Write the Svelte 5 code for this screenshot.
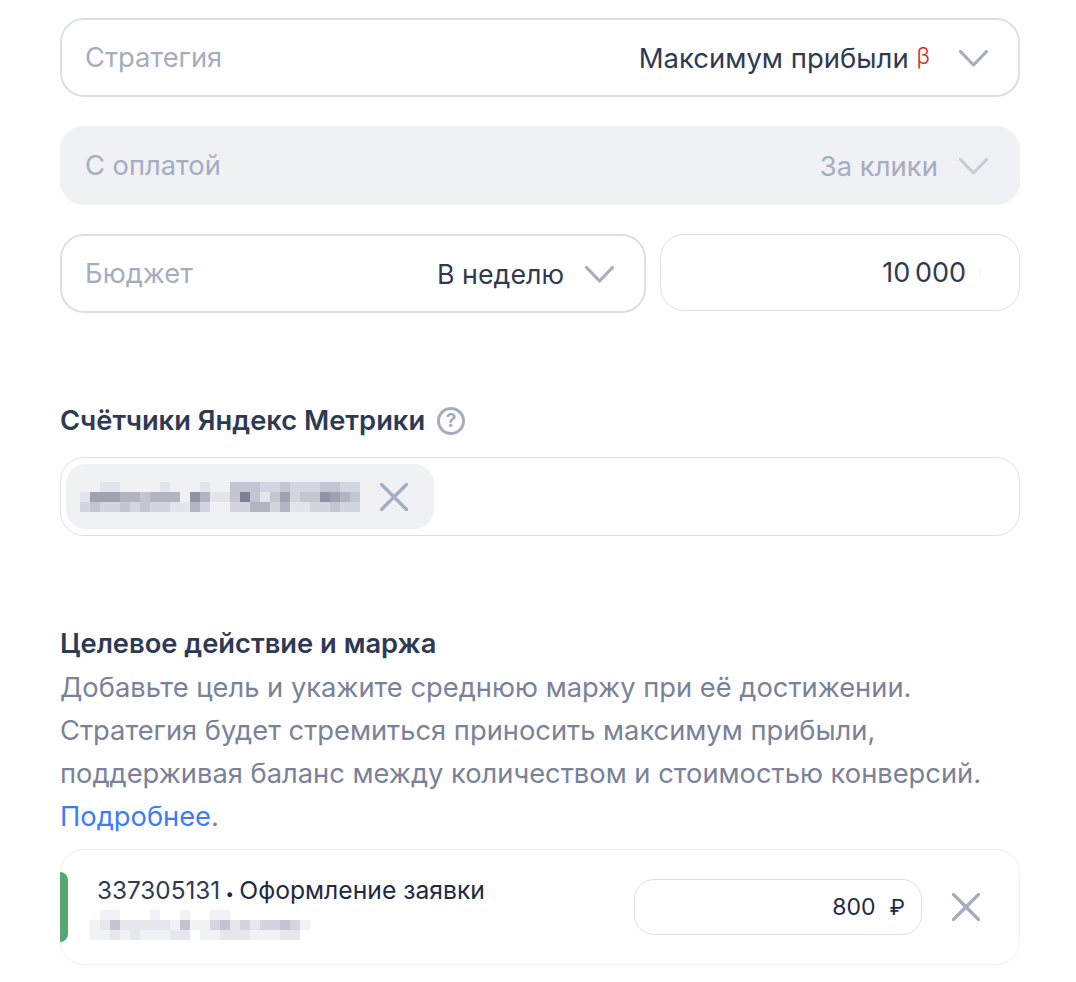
<script lang="ts">
  // digits are shades of the mosaic that stands in for blurred text, 0 = none
  const chipBlur = [
    "0011000010001003332232223322",
    "1555443444064113731352336543",
    "2322323221142002244241122322",
  ];
  const goalBlur = [
    "0110001001001100000000",
    "1242222214113423233431",
    "1121211122011222111220",
  ];
  const chipShades = ["transparent", "#e3e5ec", "#d3d6df", "#c3c6d1", "#b1b5c2", "#9ea2b1", "#8f93a4", "#7c8193"];
  const goalShades = ["transparent", "#f1f2f5", "#e6e7ec", "#d4d6df", "#c2c4d1"];
</script>

{#snippet chevron(muted = false)}
  <svg class="chevron" class:muted width="29" height="17" viewBox="0 0 29 17" fill="none">
    <path d="M1.5 1.5 14.5 15 27.5 1.5" stroke="currentColor" stroke-width="3.2" stroke-linecap="round" stroke-linejoin="round" />
  </svg>
{/snippet}

{#snippet cross()}
  <svg class="cross" width="28" height="28" viewBox="0 0 28 28" fill="none">
    <path d="M1.5 1.5 26.5 26.5M26.5 1.5 1.5 26.5" stroke="currentColor" stroke-width="3.4" stroke-linecap="round" />
  </svg>
{/snippet}

{#snippet mosaic(rows, shades)}
  <div class="mosaic">
    {#each rows as row}
      <div class="mosaic-row">
        {#each row.split("") as c}
          <i style="background: {shades[+c]}"></i>
        {/each}
      </div>
    {/each}
  </div>
{/snippet}

<main class="page">
  <div class="field">
    <span class="label">Стратегия</span>
    <span class="value">Максимум прибыли <sup class="beta">β</sup></span>
    {@render chevron()}
  </div>

  <div class="field disabled">
    <span class="label">С оплатой</span>
    <span class="value">За клики</span>
    {@render chevron(true)}
  </div>

  <div class="budget">
    <div class="field budget-select">
      <span class="label">Бюджет</span>
      <span class="value">В неделю</span>
      {@render chevron()}
    </div>
    <div class="amount">
      <span class="value">10 000</span>
      <i class="caret"></i>
    </div>
  </div>

  <h3 class="counters-title">Счётчики Яндекс Метрики <span class="help">?</span></h3>
  <div class="counters">
    <div class="chip">
      {@render mosaic(chipBlur, chipShades)}
      {@render cross()}
    </div>
  </div>

  <h3 class="goal-title">Целевое действие и маржа</h3>
  <p class="desc">
    Добавьте цель и укажите среднюю маржу при её достижении.<br />
    Стратегия будет стремиться приносить максимум прибыли,<br />
    поддерживая баланс между количеством и стоимостью конверсий.<br />
    <a href="#more">Подробнее</a>.
  </p>

  <div class="goal">
    <span class="goal-bar"></span>
    <div class="goal-info">
      <div class="goal-name"><span class="goal-id">337305131</span><span class="dot">•</span>Оформление заявки</div>
      <div class="goal-blur">
        {@render mosaic(goalBlur, goalShades)}
      </div>
    </div>
    <div class="margin"><span>800</span><span class="rub">₽</span></div>
    {@render cross()}
  </div>
</main>

<style>
  :global(body) {
    background: #fff;
  }
  .page {
    width: 960px;
    padding: 18px 56px 17px 60px;
    font-family: Inter, "Noto Sans", sans-serif;
    font-size: 27.3px;
    color: #2f3a52;
  }
  .field {
    display: flex;
    align-items: center;
    height: 79px;
    box-sizing: border-box;
    padding: 0 30px 0 23px;
    margin-bottom: 29px;
    border: 2px solid #dcdfe9;
    border-radius: 24px;
  }
  .label {
    flex: 1;
    color: #a6adc0;
  }
  .value {
    color: #2f3a52;
    font-size: 27.5px;
    white-space: nowrap;
  }
  .chevron {
    margin-left: 21px;
    margin-top: 2px;
    color: #a6adc0;
  }
  .chevron.muted {
    color: #c6cbd8;
  }
  .beta {
    margin-right: 8px;
    color: #d9261c;
    font-size: 23px;
    font-weight: 300;
    line-height: 0;
    vertical-align: 4px;
  }
  .disabled {
    background: #f0f1f5;
    border-color: #f0f1f5;
  }
  .disabled .value {
    color: #a6adc0;
  }
  .budget {
    display: flex;
    align-items: flex-start;
    gap: 14px;
    margin-bottom: 90px;
  }
  .budget-select {
    width: 586px;
    margin-bottom: 0;
  }
  .budget-select .value {
    font-size: 26.8px;
  }
  .amount {
    flex: 1;
    height: 77px;
    box-sizing: border-box;
    display: flex;
    align-items: center;
    justify-content: flex-end;
    padding-right: 38px;
    border: 1px solid #dcdfe9;
    border-radius: 24px;
    word-spacing: -3px;
  }
  .amount .value {
    font-size: 27px;
  }
  .caret {
    width: 1px;
    height: 8px;
    margin-left: 14px;
    background: #f0f1f4;
  }
  h3 {
    margin: 0;
    font-size: 27.3px;
    font-weight: 600;
    line-height: 36px;
    color: #2f3a52;
  }
  .counters-title {
    display: flex;
    align-items: center;
    gap: 12px;
    margin-bottom: 18px;
  }
  .help {
    width: 28px;
    height: 28px;
    box-sizing: border-box;
    display: flex;
    align-items: center;
    justify-content: center;
    border: 3px solid #a6adc0;
    border-radius: 50%;
    color: #a6adc0;
    font-size: 19px;
    font-weight: 700;
  }
  .counters {
    height: 79px;
    box-sizing: border-box;
    padding: 6px 5px;
    margin-bottom: 90px;
    border: 1px solid #dcdfe9;
    border-radius: 24px;
  }
  .chip {
    display: inline-flex;
    align-items: center;
    height: 65px;
    box-sizing: border-box;
    padding: 0 26px 0 14px;
    gap: 20px;
    background: #f0f1f5;
    border-radius: 20px;
  }
  .cross {
    flex-shrink: 0;
    color: #a6adc0;
  }
  .mosaic-row {
    display: flex;
  }
  .mosaic i {
    display: block;
    width: 10px;
    height: 10px;
  }
  .goal-title {
    margin-bottom: 4px;
  }
  .desc {
    margin: 0 0 11px;
    line-height: 43px;
    color: #7a8299;
  }
  .desc a {
    color: #3b7bfc;
    text-decoration: none;
  }
  .goal {
    display: flex;
    align-items: center;
    height: 116px;
    box-sizing: border-box;
    padding-right: 39px;
    border: 1px solid #eff0f3;
    border-radius: 24px;
  }
  .goal-bar {
    width: 8px;
    height: 70px;
    flex-shrink: 0;
    margin-left: -1px;
    background: #57a773;
    border-radius: 0 8px 8px 0;
  }
  .goal-info {
    flex: 1;
    padding-left: 29px;
  }
  .goal-name {
    font-size: 24.7px;
    line-height: 30px;
    color: #1d2a45;
  }
  .goal-id {
    font-size: 24.3px;
    color: #2f3a52;
  }
  .dot {
    display: inline-block;
    width: 19px;
    text-align: center;
    font-size: 15px;
    line-height: 0;
  }
  .goal-blur {
    margin-top: 5px;
    margin-left: -7px;
  }
  .margin {
    display: flex;
    align-items: center;
    justify-content: flex-end;
    gap: 14px;
    width: 288px;
    height: 56px;
    box-sizing: border-box;
    padding-right: 16px;
    margin-right: 30px;
    border: 1px solid #dcdfe9;
    border-radius: 20px;
    font-size: 23px;
    color: #1d2a45;
  }
  .rub {
    font-size: 22px;
  }
</style>
